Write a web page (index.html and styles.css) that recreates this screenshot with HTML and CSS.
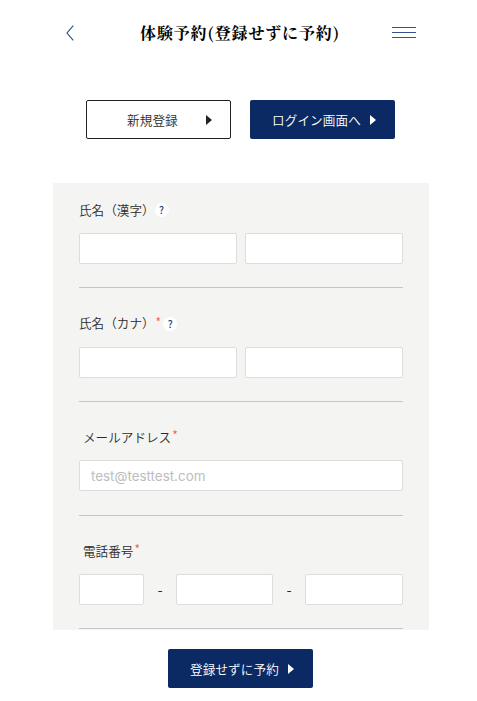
FILE: index.html
```html
<!DOCTYPE html>
<html lang="ja">
<head>
    <meta charset="UTF-8">
    <meta name="viewport" content="width=device-width, initial-scale=1.0">
    <title>体験予約</title>
    <link rel="stylesheet" href="styles.css">
</head>
<body>
    <header class="header">
        <a href="#" class="back" aria-label="戻る">
            <svg width="8" height="16" viewBox="0 0 8 16"><path d="M7.3 .7L1 8l6.3 7.3" fill="none" stroke="#2b4a85" stroke-width="1.1"/></svg>
        </a>
        <h1>体験予約(登録せずに予約)</h1>
        <div class="menu"><span></span><span></span><span></span></div>
    </header>

    <div class="links">
        <a href="#" class="btn btn-outline"><span>新規登録</span><i class="arrow"></i></a>
        <a href="#" class="btn"><span>ログイン画面へ</span><i class="arrow"></i></a>
    </div>

    <form class="form">
        <div class="form-group">
            <div class="label">氏名（漢字）<span class="help">?</span></div>
            <div class="fields">
                <input type="text">
                <input type="text">
            </div>
        </div>
        <div class="form-group">
            <div class="label">氏名（カナ）<span class="required">*</span><span class="help">?</span></div>
            <div class="fields">
                <input type="text">
                <input type="text">
            </div>
        </div>
        <div class="form-group">
            <div class="label label-indent">メールアドレス<span class="required">*</span></div>
            <div class="fields">
                <input type="text" placeholder="test@testtest.com">
            </div>
        </div>
        <div class="form-group">
            <div class="label label-indent">電話番号<span class="required">*</span></div>
            <div class="fields tel">
                <input type="text">
                <span>-</span>
                <input type="text">
                <span>-</span>
                <input type="text">
            </div>
        </div>
    </form>

    <div class="submit">
        <a href="#" class="btn"><span>登録せずに予約</span><i class="arrow"></i></a>
    </div>
</body>
</html>
```
FILE: styles.css
```css
* {
    box-sizing: border-box;
}
body {
    margin: 0;
    background-color: #fff;
    color: #2c2c2c;
    font-family: "Noto Sans CJK JP", sans-serif;
    font-size: 12.6px;
    font-weight: 350;
}
.header {
    display: grid;
    grid-template-columns: 75px 1fr 75px;
    align-items: center;
    height: 65px;
    padding: 0 1px 0 4px;
}
.back {
    height: 16px;
    padding-left: 62px;
}
.back svg {
    display: block;
}
h1 {
    margin: 0;
    color: #000;
    font-family: "Noto Serif CJK JP", "Noto Sans CJK JP", serif;
    font-size: 16px;
    font-weight: 700;
    line-height: 24px;
    letter-spacing: 0.85px;
    text-align: center;
    white-space: nowrap;
}
.menu {
    display: flex;
    flex-direction: column;
    gap: 4px;
    width: 24px;
    margin-left: -9px;
}
.menu span {
    height: 1px;
    background-color: #34528c;
}
.links {
    display: flex;
    gap: 19px;
    margin: 35px 0 0 86px;
}
.btn {
    display: flex;
    align-items: center;
    width: 145px;
    height: 39px;
    padding-left: 22px;
    border-radius: 2px;
    background-color: #0b2a63;
    color: #fff;
    text-decoration: none;
    letter-spacing: 0.1px;
    white-space: nowrap;
}
.btn-outline {
    padding-left: 40px;
    border: 1px solid #222;
    background-color: #fff;
    color: #2c2c2c;
}
.arrow {
    margin-left: 9px;
    border-left: 6px solid #fff;
    border-top: 5px solid transparent;
    border-bottom: 5px solid transparent;
}
.btn-outline .arrow {
    margin-left: 28px;
    border-left-color: #222;
}
.form {
    width: 376px;
    height: 447px;
    margin: 44px 0 0 53px;
    padding: 16px 26px 0;
    background-color: #f4f4f2;
    overflow: hidden;
}
.form-group {
    height: 89.4px;
    margin-bottom: 24.3px;
    border-bottom: 1px solid #c6c6c6;
}
.label {
    display: flex;
    align-items: center;
    height: 20px;
    margin-bottom: 14px;
    white-space: nowrap;
}
.label-indent {
    padding-left: 4px;
}
.required {
    align-self: flex-start;
    margin-left: 1px;
    color: #ff5a5f;
    font-size: 12px;
    font-weight: 400;
    line-height: 18px;
}
.help {
    width: 14px;
    height: 14px;
    margin-top: 2px;
    border-radius: 50%;
    background-color: #fff;
    color: #24437e;
    font-size: 10px;
    font-weight: 500;
    line-height: 14px;
    text-align: center;
}
.required + .help {
    margin-left: 2px;
}
.fields {
    display: flex;
    gap: 8px;
}
input[type="text"] {
    flex: 1;
    min-width: 0;
    height: 31px;
    padding: 0 11px;
    border: 1px solid #dcdddc;
    border-radius: 2px;
    background-color: #fff;
    font-family: Inter, sans-serif;
    font-size: 13.4px;
}
input::placeholder {
    color: #bdbdbd;
}
.tel {
    display: grid;
    grid-template-columns: 65px 32px 97px 32px 98px;
    gap: 0;
    align-items: center;
    font-size: 15px;
    line-height: 20px;
    text-align: center;
}
.submit {
    display: flex;
    justify-content: center;
    margin: 19px 0 0 4px;
}
```
